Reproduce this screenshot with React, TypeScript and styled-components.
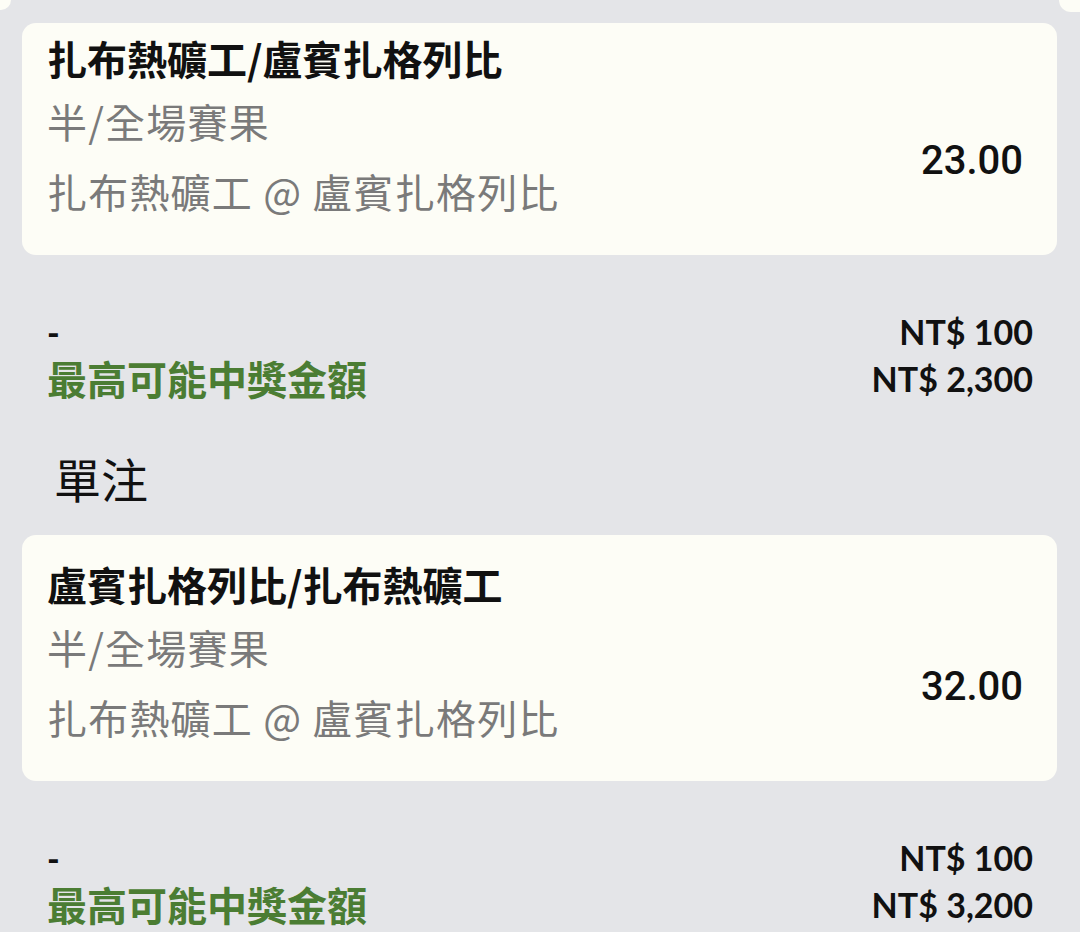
import React from 'react';
import styled, {createGlobalStyle} from 'styled-components';

const GlobalStyle = createGlobalStyle`
	html, body {
		margin: 0;
		padding: 0;
		background: #e4e5e8;
	}
	body {
		font-family: "Noto Sans CJK TC", "Noto Sans", sans-serif;
		color: #111;
	}
`;

const Page = styled.div`
	width: 1080px;
	height: 932px;
	overflow: hidden;
	background: #e4e5e8;
`;

const TopEdge = styled.div`
	height: 23px;
	display: flex;
	justify-content: space-between;
	align-items: flex-start;
`;

const Corner = styled.div<{side: 'left' | 'right'}>`
	background: #fdfdf6;
	width: ${p => (p.side === 'left' ? '11px' : '21px')};
	height: ${p => (p.side === 'left' ? '10px' : '12px')};
	border-bottom-right-radius: ${p => (p.side === 'left' ? '11px' : '0')};
	border-bottom-left-radius: ${p => (p.side === 'right' ? '16px' : '0')};
`;

const List = styled.div`
	padding: 0 23px 0 22px;
`;

const Card = styled.div<{compact?: boolean}>`
	background: #fdfdf6;
	border-radius: 14px;
	padding: ${p => (p.compact ? '11px' : '25px')} 34px 29px 25px;
`;

const Title = styled.div`
	font-family: "Noto Sans CJK TC", sans-serif;
	font-weight: 700;
	font-size: 40px;
	line-height: 48px;
	color: #111;
`;

const Body = styled.div`
	margin-top: 4px;
	display: flex;
	align-items: center;
	justify-content: space-between;
`;

const Lines = styled.div`
	display: flex;
	flex-direction: column;
`;

const Line = styled.div`
	font-family: "Noto Sans CJK TC", sans-serif;
	font-weight: 400;
	font-size: 40px;
	letter-spacing: 1.2px;
	line-height: 70px;
	color: #7a7a7a;
`;

const Odds = styled.div`
	font-family: Roboto, "Liberation Sans", sans-serif;
	font-weight: 500;
	font-size: 40px;
	color: #111;
	padding-top: 8px;
`;

const Summary = styled.div`
	margin-top: 53px;
	padding: 0 24px 0 25px;
	display: flex;
	justify-content: space-between;
`;

const SummaryCol = styled.div<{align?: 'left' | 'right'}>`
	display: flex;
	flex-direction: column;
	align-items: ${p => (p.align === 'right' ? 'flex-end' : 'flex-start')};
`;

const Amount = styled.div<{heavy?: boolean}>`
	font-family: Lato, "Liberation Sans", sans-serif;
	font-weight: ${p => (p.heavy ? 900 : 700)};
	font-size: 34px;
	line-height: 47px;
	color: #111;
`;

const PayoutLabel = styled.div`
	font-family: "Noto Sans CJK TC", sans-serif;
	font-weight: 700;
	font-size: 40px;
	line-height: 47px;
	color: #4b7d33;
`;

const SectionTitle = styled.div`
	margin: 48px 0 29px 32px;
	font-family: "Noto Sans CJK TC", sans-serif;
	font-weight: 400;
	font-size: 47px;
	line-height: 56px;
	color: #111;
`;

interface Bet {
	title: string;
	market: string;
	match: string;
	odds: string;
	stake: string;
	payout: string;
}

const bets: Bet[] = [
	{
		title: '扎布熱礦工/盧賓扎格列比',
		market: '半/全場賽果',
		match: '扎布熱礦工 @ 盧賓扎格列比',
		odds: '23.00',
		stake: 'NT$ 100',
		payout: 'NT$ 2,300',
	},
	{
		title: '盧賓扎格列比/扎布熱礦工',
		market: '半/全場賽果',
		match: '扎布熱礦工 @ 盧賓扎格列比',
		odds: '32.00',
		stake: 'NT$ 100',
		payout: 'NT$ 3,200',
	},
];

const BetBlock = ({bet, compact}: {bet: Bet; compact?: boolean}) => (
	<>
		<Card compact={compact}>
			<Title>{bet.title}</Title>
			<Body>
				<Lines>
					<Line>{bet.market}</Line>
					<Line>{bet.match}</Line>
				</Lines>
				<Odds>{bet.odds}</Odds>
			</Body>
		</Card>
		<Summary>
			<SummaryCol>
				<Amount heavy>-</Amount>
				<PayoutLabel>最高可能中獎金額</PayoutLabel>
			</SummaryCol>
			<SummaryCol align="right">
				<Amount>{bet.stake}</Amount>
				<Amount>{bet.payout}</Amount>
			</SummaryCol>
		</Summary>
	</>
);

const App = (): JSX.Element => (
	<>
		<GlobalStyle/>
		<Page>
			<TopEdge>
				<Corner side="left"/>
				<Corner side="right"/>
			</TopEdge>
			<List>
				<BetBlock bet={bets[0]} compact/>
				<SectionTitle>單注</SectionTitle>
				<BetBlock bet={bets[1]}/>
			</List>
		</Page>
	</>
);

export default App;
